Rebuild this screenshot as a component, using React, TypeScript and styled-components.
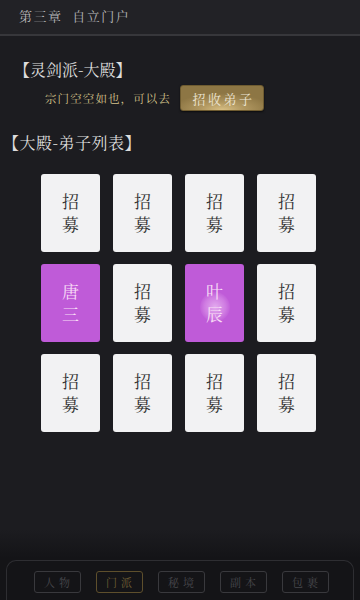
import React from "react";
import styled, { createGlobalStyle } from "styled-components";

const Global = createGlobalStyle`
  html, body { margin: 0; padding: 0; background: #1c1c20; }
  * { box-sizing: border-box; }
  body { font-family: "Noto Serif CJK SC", "Noto Sans CJK SC", sans-serif; }
`;

const Page = styled.div`
  width: 360px;
  height: 600px;
  display: flex;
  flex-direction: column;
  background: #1c1c20;
  overflow: hidden;
`;

const Header = styled.div`
  height: 36px;
  flex-shrink: 0;
  background: #222226;
  border-bottom: 2px solid #37373b;
  display: flex;
  align-items: center;
  padding-left: 19px;
  padding-bottom: 4px;
`;

const HeaderTitle = styled.span`
  color: #b9b9bb;
  font-size: 13px;
  letter-spacing: 1.5px;
  white-space: pre;
`;

const Section = styled.div`
  display: flex;
  flex-direction: column;
`;

const HallTitle = styled.div`
  margin: 24px 0 0 14px;
  color: #dcdcdc;
  font-size: 16px;
  line-height: 20px;
`;

const RecruitRow = styled.div`
  display: flex;
  align-items: center;
  margin: 5px 0 0 45px;
  gap: 9px;
`;

const Hint = styled.span`
  color: #d4c28a;
  font-size: 11.5px;
  letter-spacing: 1.1px;
`;

const GoldButton = styled.button`
  width: 84px;
  height: 26px;
  border: 1px solid #6e5b30;
  border-radius: 3px;
  background: radial-gradient(ellipse 60% 70% at 50% 100%, #d8bf84 0%, #b09760 45%, #8d7644 100%);
  color: #ece4d2;
  font-family: inherit;
  font-size: 13px;
  letter-spacing: 2.5px;
  padding: 0 0 0 3px;
  box-shadow: 0 1px 2px rgba(0, 0, 0, 0.6);
`;

const ListTitle = styled.div`
  margin: 22px 0 0 3px;
  color: #dcdcdc;
  font-size: 16px;
  line-height: 20px;
  letter-spacing: 0.5px;
`;

const Grid = styled.div`
  display: grid;
  grid-template-columns: repeat(4, 59px);
  grid-auto-rows: 78px;
  column-gap: 13px;
  row-gap: 12px;
  margin: 21px 0 0 41px;
`;

const Card = styled.div<{ $filled?: boolean }>`
  position: relative;
  border-radius: 3px;
  background: ${(p) => (p.$filled ? "#bf5bd8" : "#f2f2f3")};
  color: ${(p) => (p.$filled ? "#f8dcf6" : "#2e2e2e")};
  display: flex;
  flex-direction: column;
  align-items: center;
  justify-content: center;
  font-size: 17px;
  line-height: 23px;
  padding-bottom: 2px;
`;

const Glow = styled.span`
  position: absolute;
  left: 15px;
  top: 28px;
  width: 30px;
  height: 30px;
  border-radius: 50%;
  background: radial-gradient(circle, rgba(255, 235, 255, 0.55) 0%, rgba(255, 220, 255, 0.25) 50%, rgba(255, 220, 255, 0) 75%);
`;

const CardChar = styled.span`
  position: relative;
`;

const Footer = styled.div`
  margin-top: auto;
  height: 70px;
  background: linear-gradient(#1c1c20, #141417 40%);
  display: flex;
  align-items: flex-end;
  padding: 0 6px;
`;

const NavFrame = styled.div`
  flex: 1;
  height: 40px;
  border: 1px solid #2e2e32;
  border-bottom: none;
  border-radius: 10px 10px 0 0;
  display: flex;
  justify-content: center;
  gap: 15px;
  padding-top: 10px;
  padding-left: 2px;
`;

const NavButton = styled.div<{ $active?: boolean }>`
  width: 47px;
  height: 22px;
  border: 1px solid ${(p) => (p.$active ? "#5e4f2c" : "#39393d")};
  border-radius: 3px;
  background: #141417;
  color: ${(p) => (p.$active ? "#6e5d33" : "#48484d")};
  font-size: 11px;
  letter-spacing: 4px;
  display: flex;
  align-items: center;
  justify-content: center;
  padding-left: 4px;
`;

type Slot = { name?: string; glow?: boolean };

const slots: Slot[] = [
  {}, {}, {}, {},
  { name: "唐三" }, {}, { name: "叶辰", glow: true }, {},
  {}, {}, {}, {},
];

const navs = ["人物", "门派", "秘境", "副本", "包裹"];

export default function App() {
  return (
    <Page>
      <Global />
      <Header>
        <HeaderTitle>第三章  自立门户</HeaderTitle>
      </Header>
      <Section>
        <HallTitle>【灵剑派-大殿】</HallTitle>
        <RecruitRow>
          <Hint>宗门空空如也，可以去</Hint>
          <GoldButton>招收弟子</GoldButton>
        </RecruitRow>
        <ListTitle>【大殿-弟子列表】</ListTitle>
        <Grid>
          {slots.map((s, i) => {
            const text = s.name ?? "招募";
            return (
              <Card key={i} $filled={!!s.name}>
                {s.glow && <Glow />}
                <CardChar>{text[0]}</CardChar>
                <CardChar>{text[1]}</CardChar>
              </Card>
            );
          })}
        </Grid>
      </Section>
      <Footer>
        <NavFrame>
          {navs.map((n) => (
            <NavButton key={n} $active={n === "门派"}>
              {n}
            </NavButton>
          ))}
        </NavFrame>
      </Footer>
    </Page>
  );
}
